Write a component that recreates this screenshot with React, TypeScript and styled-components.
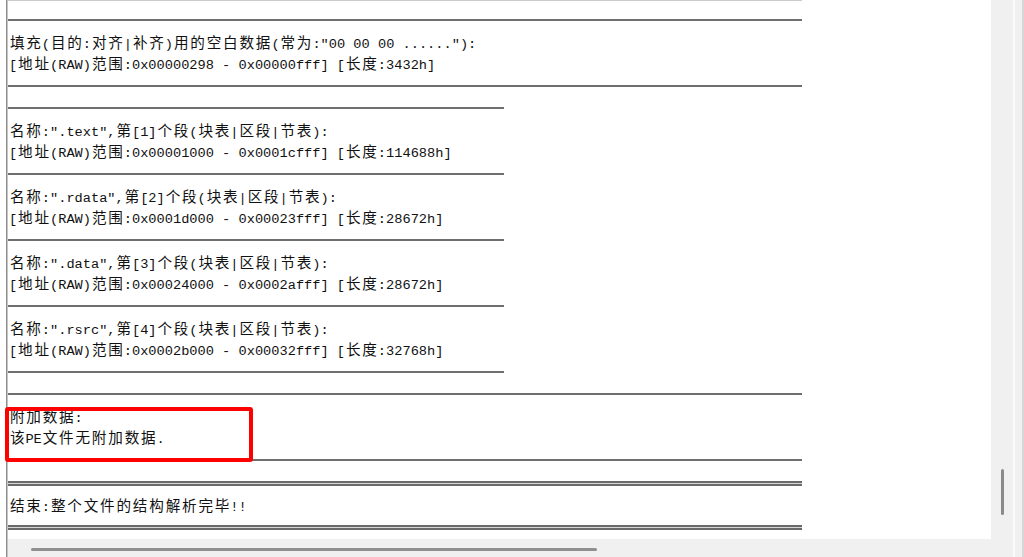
import React from "react";
import styled, { createGlobalStyle } from "styled-components";

const Global = createGlobalStyle`
  html, body { margin: 0; padding: 0; background: #ffffff; }
  body { width: 1024px; height: 557px; overflow: hidden; }
  #root { width: 1024px; height: 557px; }
`;

const Window = styled.div`
  display: flex;
  width: 1024px;
  height: 557px;
  background: #ffffff;
  overflow: hidden;
`;

const Gutter = styled.div`
  width: 6px;
  flex: none;
  background: #ffffff;
`;

const FrameEdge = styled.div`
  width: 2px;
  flex: none;
  background: #8d8d8d;
  box-shadow: inset -1px 0 #c4c4c4;
`;

const Main = styled.div`
  display: flex;
  flex-direction: column;
  width: 1005px;
  flex: none;
`;

const Viewport = styled.div`
  display: flex;
  flex: 1;
  min-height: 0;
`;

const Content = styled.div`
  width: 983px;
  flex: none;
  background: #ffffff;
  display: flex;
  flex-direction: column;
  border-bottom-right-radius: 3px;
`;

const VTrack = styled.div`
  flex: 1;
  background: #f0f0f0;
  padding: 469px 0 0 10px;
`;

const VThumb = styled.div`
  width: 3px;
  height: 46px;
  border-radius: 2px;
  background: #8a8a8a;
`;

const HTrack = styled.div`
  height: 18px;
  flex: none;
  background: #f0f0f0;
  padding: 9px 0 0 23px;
  box-sizing: border-box;
`;

const HThumb = styled.div`
  width: 566px;
  height: 3px;
  border-radius: 2px;
  background: #8f8f8f;
`;

const SideLight = styled.div`
  width: 2px;
  flex: none;
  background: #fafafa;
`;

const SideGray = styled.div`
  width: 7px;
  flex: none;
  background: #f0f0f0;
`;

const SideEdge = styled.div`
  width: 2px;
  flex: none;
  background: #d7d7d7;
`;

const HairRule = styled.div`
  width: 794px;
  height: 1px;
  flex: none;
  background: #cacaca;
`;

const Blank = styled.div<{ $h: number }>`
  height: ${(p) => p.$h}px;
  flex: none;
`;

const Rule = styled.div<{ $long?: boolean }>`
  width: ${(p) => (p.$long ? 794 : 496)}px;
  height: 2px;
  flex: none;
  background: #6f6f6f;
`;

const DoubleRule = styled.div`
  width: 794px;
  height: 1px;
  flex: none;
  border-top: 2px solid #6a6a6a;
  border-bottom: 2px solid #6a6a6a;
  background: #d8d8d8;
`;

const Entry = styled.div<{ $pad?: number }>`
  position: relative;
  padding: ${(p) => p.$pad ?? 11}px 0 ${(p) => p.$pad ?? 11}px 1px;
  flex: none;
`;

const Line = styled.div`
  height: 21px;
  line-height: 21px;
  white-space: pre;
  color: #111111;
`;

const Latin = styled.span`
  font-family: "Liberation Mono", "DejaVu Sans Mono", monospace;
  font-size: 13.66px;
  line-height: 1;
`;

const Han = styled.span`
  font-family: "Noto Sans CJK SC", "Noto Sans", sans-serif;
  font-size: 14.6px;
  letter-spacing: 1.8px;
  line-height: 1;
  padding-left: 0.9px;
  margin-right: -0.9px;
`;

const Highlight = styled.div`
  position: absolute;
  left: -3px;
  top: 12px;
  width: 248px;
  height: 55px;
  box-sizing: border-box;
  border: 4px solid #ff0000;
  border-radius: 3px;
  z-index: 1;
  pointer-events: none;
`;

const HAN_RE = /([\u3400-\u9fff]+)/;

function Mixed({ text }: { text: string }) {
  const parts = text.split(HAN_RE);
  return (
    <>
      {parts.map((p, i) =>
        p === "" ? null : /[\u3400-\u9fff]/.test(p) ? (
          <Han key={i}>{p}</Han>
        ) : (
          <Latin key={i}>{p}</Latin>
        )
      )}
    </>
  );
}

type Section = { name: string; idx: number; from: string; to: string; len: string };

const sections: Section[] = [
  { name: ".text", idx: 1, from: "0x00001000", to: "0x0001cfff", len: "114688h" },
  { name: ".rdata", idx: 2, from: "0x0001d000", to: "0x00023fff", len: "28672h" },
  { name: ".data", idx: 3, from: "0x00024000", to: "0x0002afff", len: "28672h" },
  { name: ".rsrc", idx: 4, from: "0x0002b000", to: "0x00032fff", len: "32768h" },
];

function TextEntry({ lines, pad }: { lines: string[]; pad?: number }) {
  return (
    <Entry $pad={pad}>
      {lines.map((l, i) => (
        <Line key={i}>
          <Mixed text={l} />
        </Line>
      ))}
    </Entry>
  );
}

export default function App() {
  return (
    <>
      <Global />
      <Window>
        <Gutter />
        <FrameEdge />
        <Main>
          <Viewport>
            <Content>
              <HairRule />
              <Blank $h={18} />
              <Rule $long />
              <TextEntry
                lines={[
                  '填充(目的:对齐|补齐)用的空白数据(常为:"00 00 00 ......"):',
                  "[地址(RAW)范围:0x00000298 - 0x00000fff] [长度:3432h]",
                ]}
              />
              <Rule $long />
              <Blank $h={20} />
              <Rule />
              {sections.map((s) => (
                <React.Fragment key={s.idx}>
                  <TextEntry
                    lines={[
                      `名称:"${s.name}",第[${s.idx}]个段(块表|区段|节表):`,
                      `[地址(RAW)范围:${s.from} - ${s.to}] [长度:${s.len}]`,
                    ]}
                  />
                  <Rule />
                </React.Fragment>
              ))}
              <Blank $h={20} />
              <Rule $long />
              <Entry>
                <Line>
                  <Mixed text="附加数据:" />
                </Line>
                <Line>
                  <Mixed text="该PE文件无附加数据." />
                </Line>
                <Highlight />
              </Entry>
              <Rule $long />
              <Blank $h={20} />
              <DoubleRule />
              <TextEntry pad={9} lines={["结束:整个文件的结构解析完毕!!"]} />
              <DoubleRule />
            </Content>
            <VTrack>
              <VThumb />
            </VTrack>
          </Viewport>
          <HTrack>
            <HThumb />
          </HTrack>
        </Main>
        <SideLight />
        <SideGray />
        <SideEdge />
      </Window>
    </>
  );
}
